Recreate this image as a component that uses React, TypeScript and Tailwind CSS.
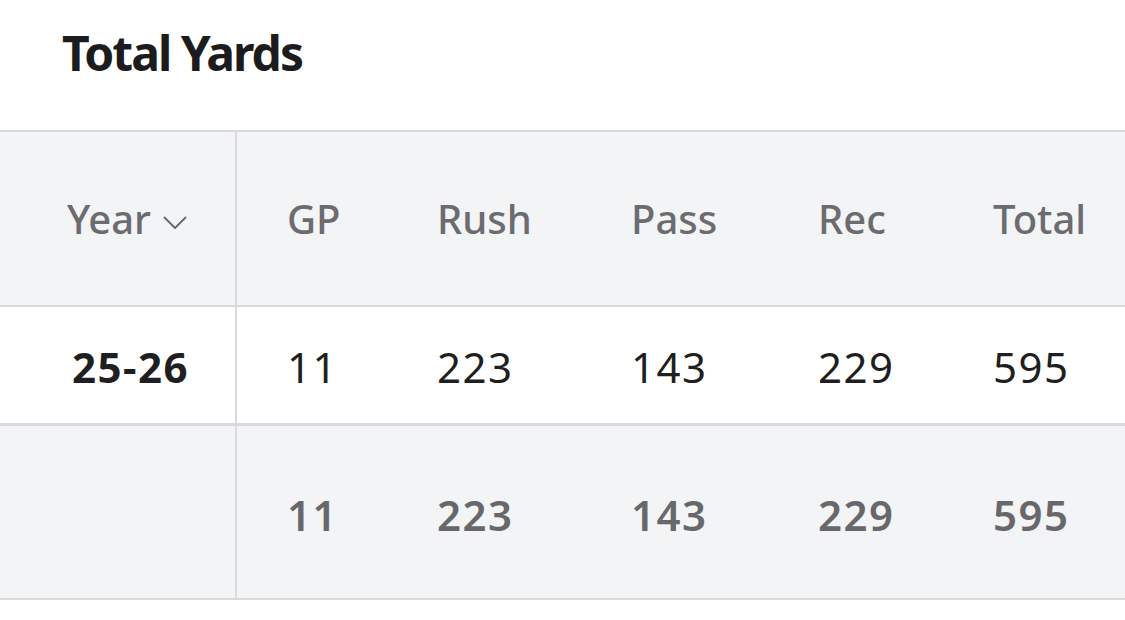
import React from 'react';

type Row = { year?: string; gp: string; rush: string; pass: string; rec: string; total: string };

const COLS = 'grid grid-cols-[237px_150px_194px_187px_175px_1fr]';

const rows: Row[] = [{ year: '25-26', gp: '11', rush: '223', pass: '143', rec: '229', total: '595' }];
const totals: Row = { gp: '11', rush: '223', pass: '143', rec: '229', total: '595' };

const Chevron = () => (
  <svg width="24" height="14" viewBox="0 0 24 14" fill="none" className="ml-[12px] mt-[8px]">
    <path d="M1.5 1.5 L12 12 L22.5 1.5" stroke="#6b6b70" strokeWidth="2" strokeLinecap="round" strokeLinejoin="round" />
  </svg>
);

const App: React.FC = () => {
  const cells = (r: Row) => [r.gp, r.rush, r.pass, r.rec, r.total];

  return (
    <div className="w-[1125px] h-[620px] bg-white overflow-hidden font-['Noto_Sans',sans-serif]">
      {/* Titulo */}
      <h2 className="pl-[62px] pt-[20px] text-[48px] leading-[66px] font-bold tracking-[-2px] text-[#1c1c1e]">
        Total Yards
      </h2>

      <div className="mt-[44px] border-t-2 border-[#d9d9de]">
        {/* Cabecera */}
        <div className={`${COLS} h-[175px] bg-[#f3f4f6] border-b-2 border-[#d9d9de] text-[40px] font-medium text-[#6b6b70]`}>
          <div className="flex items-center justify-end pr-[48px] border-r-2 border-[#d9d9de]">
            <span>Year</span>
            <Chevron />
          </div>
          {['GP', 'Rush', 'Pass', 'Rec', 'Total'].map((h) => (
            <div key={h} className="flex items-center pl-[50px]">
              {h}
            </div>
          ))}
        </div>

        {/* Filas */}
        {rows.map((r) => (
          <div key={r.year} className={`${COLS} h-[119px] bg-white border-b-[3px] border-[#d9d9de] text-[42px] text-[#1f1f21]`}>
            <div className="flex items-center justify-end pr-[46px] pt-[2px] border-r-2 border-[#d9d9de] font-bold tracking-[1.5px]">
              {r.year}
            </div>
            {cells(r).map((v, i) => (
              <div key={i} className="flex items-center pl-[50px] pt-[2px] tracking-[1.5px]">
                {v}
              </div>
            ))}
          </div>
        ))}

        {/* Totales */}
        <div className={`${COLS} h-[174px] bg-[#f3f4f6] border-b-2 border-[#d9d9de] text-[42px] font-semibold text-[#68686c]`}>
          <div className="border-r-2 border-[#d9d9de]" />
          {cells(totals).map((v, i) => (
            <div key={i} className="flex items-center pl-[50px] pt-[4px] tracking-[1.5px]">
              {v}
            </div>
          ))}
        </div>
      </div>
    </div>
  );
};

export default App;
